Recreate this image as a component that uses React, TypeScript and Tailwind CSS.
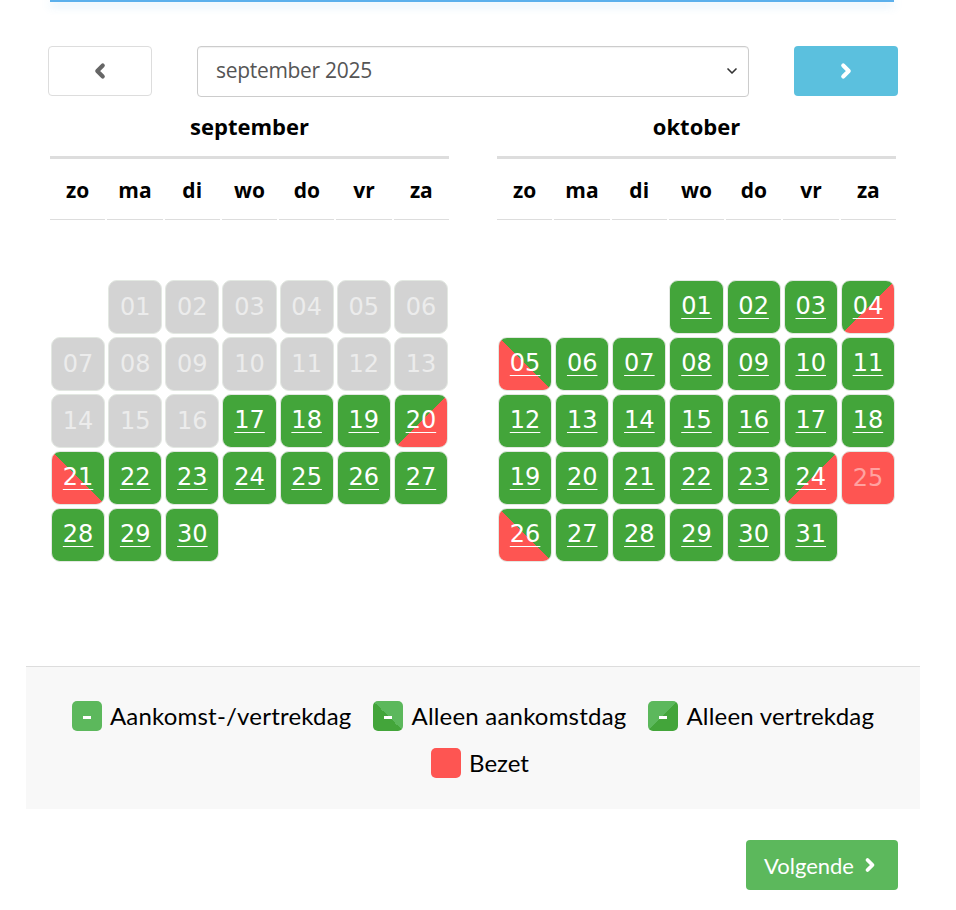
import { ChevronLeft, ChevronRight, ChevronDown } from "lucide-react"

type DayState = "past" | "free" | "arrive" | "depart" | "busy"

const september: { day: number; state: DayState }[] = Array.from({ length: 30 }, (_, i) => {
  const d = i + 1
  let state: DayState = "free"
  if (d <= 16) state = "past"
  if (d === 20) state = "arrive"
  if (d === 21) state = "depart"
  return { day: d, state }
})

const oktober: { day: number; state: DayState }[] = Array.from({ length: 31 }, (_, i) => {
  const d = i + 1
  let state: DayState = "free"
  if (d === 4 || d === 24) state = "arrive"
  if (d === 5 || d === 26) state = "depart"
  if (d === 25) state = "busy"
  return { day: d, state }
})

const weekdays = ["zo", "ma", "di", "wo", "do", "vr", "za"]

function DayCell({ day, state }: { day: number; state: DayState }) {
  const label = day.toString().padStart(2, "0")
  const base =
    "h-[54px] rounded-[9px] border border-[#e3e8e2] flex items-center justify-center text-[24px] leading-none"
  if (state === "past") {
    return <div className={`${base} bg-[#d3d3d3] text-[#ececec]`}>{label}</div>
  }
  if (state === "busy") {
    return <div className={`${base} bg-[#fe5552] text-[#ffa2a0]`}>{label}</div>
  }
  const bg =
    state === "arrive"
      ? "bg-[linear-gradient(to_bottom_right,#43a53a_50%,#fe5552_50%)]"
      : state === "depart"
        ? "bg-[linear-gradient(to_top_right,#fe5552_50%,#43a53a_50%)]"
        : "bg-[#43a53a]"
  return (
    <div className={`${base} ${bg} text-white`}>
      <span className="underline decoration-1 underline-offset-[4px] pb-[2px]">{label}</span>
    </div>
  )
}

function Month({ title, offset, days }: { title: string; offset: number; days: { day: number; state: DayState }[] }) {
  return (
    <div className="w-[399px]">
      <div className="h-[49px] flex items-end justify-center pb-[2px] text-[22px] font-bold text-black">{title}</div>
      <div className="h-[3px] bg-[#dddddd] mt-[11px]" />
      <div className="grid grid-cols-7 gap-x-[2px]">
        {weekdays.map((w) => (
          <div
            key={w}
            className="h-[61px] pt-[4px] flex items-center justify-center border-b border-[#dddddd] text-[21px] font-bold text-black"
          >
            {w}
          </div>
        ))}
      </div>
      <div className="grid grid-cols-7 gap-[3px] mt-[60px] px-[1px] font-['DejaVu_Sans',sans-serif]">
        {Array.from({ length: offset }).map((_, i) => (
          <div key={`e${i}`} />
        ))}
        {days.map((d) => (
          <DayCell key={d.day} day={d.day} state={d.state} />
        ))}
      </div>
    </div>
  )
}

function LegendBox({ kind }: { kind: "both" | "arrive" | "depart" | "busy" }) {
  const bg =
    kind === "both"
      ? "bg-[#5cb85c]"
      : kind === "arrive"
        ? "bg-[linear-gradient(to_top_right,#43a53a_50%,#5cb85c_50%)]"
        : kind === "depart"
          ? "bg-[linear-gradient(to_bottom_right,#5cb85c_50%,#43a53a_50%)]"
          : "bg-[#fe5552]"
  return (
    <span className={`w-[30px] h-[30px] rounded-[5px] ${bg} flex items-center justify-center`}>
      {kind !== "busy" && <span className="w-[8px] h-[3px] bg-white mt-[2px]" />}
    </span>
  )
}

export default function App() {
  return (
    <div className="w-[956px] h-[910px] bg-white font-['Lato',sans-serif] text-black overflow-hidden">
      {/* top accent line */}
      <div className="ml-[50px] w-[844px] h-[2px] bg-[#5cb0ec] shadow-[0_3px_10px_rgba(92,176,236,0.45)]" />

      <div className="pl-[48px] w-[898px]">
        {/* navigation */}
        <div className="flex items-center mt-[44px] h-[50px]">
          <button className="w-[104px] h-[50px] rounded-[4px] border border-[#dddddd] bg-white flex items-center justify-center">
            <ChevronLeft size={22} strokeWidth={4.5} className="text-[#666666]" />
          </button>
          <div className="ml-[45px] w-[552px] h-[51px] rounded-[4px] border border-[#cccccc] bg-white flex items-center justify-between pl-[18px] pr-[8px] shadow-[inset_0_1px_1px_rgba(0,0,0,0.06)]">
            <span className="font-['Open_Sans',sans-serif] text-[21px] text-[#555555] tracking-[-0.3px]">september 2025</span>
            <ChevronDown size={16} strokeWidth={2.5} className="text-[#333333]" />
          </div>
          <button className="ml-[45px] w-[104px] h-[50px] rounded-[4px] bg-[#5bc0de] flex items-center justify-center">
            <ChevronRight size={22} strokeWidth={4.5} className="text-white" />
          </button>
        </div>

        {/* months */}
        <div className="flex gap-[48px] pl-[2px] font-['Open_Sans',sans-serif]">
          <Month title="september" offset={1} days={september} />
          <Month title="oktober" offset={3} days={oktober} />
        </div>
      </div>

      {/* legend */}
      <div className="ml-[26px] w-[894px] mt-[104px] border-t border-[#dddddd] bg-[#f8f8f8] h-[143px] pt-[33px] text-[24px]">
        <div className="flex items-center justify-center gap-[22px] h-[32px] tracking-[0.2px]">
          <div className="flex items-center gap-[8px]">
            <LegendBox kind="both" />
            <span>Aankomst-/vertrekdag</span>
          </div>
          <div className="flex items-center gap-[8px]">
            <LegendBox kind="arrive" />
            <span>Alleen aankomstdag</span>
          </div>
          <div className="flex items-center gap-[8px]">
            <LegendBox kind="depart" />
            <span>Alleen vertrekdag</span>
          </div>
        </div>
        <div className="flex items-center justify-center mt-[15px] h-[32px] pl-[14px]">
          <div className="flex items-center gap-[8px]">
            <LegendBox kind="busy" />
            <span>Bezet</span>
          </div>
        </div>
      </div>

      {/* next */}
      <div className="w-[898px] flex justify-end mt-[31px]">
        <button className="w-[152px] h-[50px] rounded-[4px] bg-[#5cb85c] text-white text-[22px] flex items-center justify-center gap-[6px]">
          Volgende
          <ChevronRight size={20} strokeWidth={4.5} />
        </button>
      </div>
    </div>
  )
}
